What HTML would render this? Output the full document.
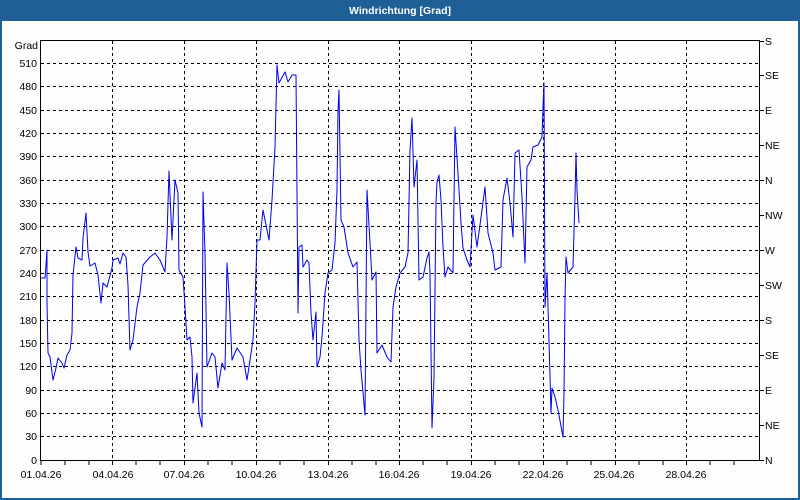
<!DOCTYPE html>
<html><head><meta charset="utf-8"><style>
html,body{margin:0;padding:0;width:800px;height:500px;overflow:hidden;background:#fff}
svg{display:block}
text{font-family:"Liberation Sans",sans-serif;font-size:10.5px;fill:#000}
</style></head><body>
<svg width="800" height="500" xmlns="http://www.w3.org/2000/svg">
<rect x="0" y="0" width="800" height="500" fill="#1e5f98"/>
<rect x="2" y="21" width="796" height="477" fill="#fdfdfd"/>
<text x="400" y="14" text-anchor="middle" style="font-weight:bold;fill:#fff;font-size:10.5px">Windrichtung [Grad]</text>
<g stroke="#000" stroke-width="1" stroke-dasharray="3,3" shape-rendering="crispEdges">
<line x1="41" y1="63.5" x2="759" y2="63.5"/>
<line x1="41" y1="86.5" x2="759" y2="86.5"/>
<line x1="41" y1="110.5" x2="759" y2="110.5"/>
<line x1="41" y1="133.5" x2="759" y2="133.5"/>
<line x1="41" y1="156.5" x2="759" y2="156.5"/>
<line x1="41" y1="180.5" x2="759" y2="180.5"/>
<line x1="41" y1="203.5" x2="759" y2="203.5"/>
<line x1="41" y1="226.5" x2="759" y2="226.5"/>
<line x1="41" y1="250.5" x2="759" y2="250.5"/>
<line x1="41" y1="273.5" x2="759" y2="273.5"/>
<line x1="41" y1="296.5" x2="759" y2="296.5"/>
<line x1="41" y1="320.5" x2="759" y2="320.5"/>
<line x1="41" y1="343.5" x2="759" y2="343.5"/>
<line x1="41" y1="366.5" x2="759" y2="366.5"/>
<line x1="41" y1="390.5" x2="759" y2="390.5"/>
<line x1="41" y1="413.5" x2="759" y2="413.5"/>
<line x1="41" y1="436.5" x2="759" y2="436.5"/>
<line x1="112.5" y1="41" x2="112.5" y2="460"/>
<line x1="184.5" y1="41" x2="184.5" y2="460"/>
<line x1="256.5" y1="41" x2="256.5" y2="460"/>
<line x1="328.5" y1="41" x2="328.5" y2="460"/>
<line x1="399.5" y1="41" x2="399.5" y2="460"/>
<line x1="471.5" y1="41" x2="471.5" y2="460"/>
<line x1="543.5" y1="41" x2="543.5" y2="460"/>
<line x1="615.5" y1="41" x2="615.5" y2="460"/>
<line x1="686.5" y1="41" x2="686.5" y2="460"/>
</g>
<polyline fill="none" stroke="#0000ee" stroke-width="1" stroke-linejoin="round" points="40,278 45,278 46,265 47,250 47,303 48,353 50,357 53,380 56,368 58,358 62,363 64,368 67,355 70,350 72,333 73,275 76,247 78,258 82,260 83,238 86,213 88,252 90,266 95,263 98,275 101,303 103,283 107,287 112,268 113,260 118,258 120,264 123,253 126,257 128,285 130,350 133,340 137,307 140,293 143,265 150,257 155,253 160,260 165,272 167,237 169,171 172,240 175,180 178,193 179,270 183,277 185,307 187,340 190,337 192,357 193,403 197,373 199,413 202,427 203,192 205,253 207,367 212,353 215,357 218,388 222,363 225,370 227,263 229,293 232,360 237,348 243,357 247,380 250,360 253,340 255,303 257,240 260,240 263,210 269,240 272,200 275,147 277,65 279,83 285,72 288,82 292,75 296,75 297,193 298,313 299,247 302,245 303,267 307,260 309,263 311,313 313,340 316,312 317,367 320,357 322,337 325,293 328,273 332,270 335,243 337,190 338,112 339,90 341,220 344,227 348,253 353,267 357,262 359,340 361,370 365,415 367,190 370,243 372,280 376,272 377,353 382,345 387,357 391,362 393,307 396,287 400,273 405,267 408,253 410,150 412,118 414,187 417,160 419,280 423,277 427,258 429,252 430,273 432,428 434,378 436,203 437,182 439,175 441,200 443,247 445,277 448,267 453,273 455,127 458,173 461,223 463,248 467,260 470,267 473,215 477,247 482,210 485,187 488,233 493,253 495,270 501,267 503,200 507,178 510,203 513,237 515,153 519,150 522,197 525,263 527,167 531,160 533,147 538,145 542,137 543,107 544,83 545,307 547,273 549,340 551,413 552,388 555,397 558,410 563,437 564,393 565,300 566,257 568,273 573,267 575,197 576,153 577,190 579,223"/>
<rect x="40.5" y="40.5" width="719" height="420" fill="none" stroke="#000" stroke-width="1" shape-rendering="crispEdges"/>
<g stroke="#000" stroke-width="1" shape-rendering="crispEdges">
<line x1="760" y1="41.5" x2="764" y2="41.5"/><line x1="760" y1="75.5" x2="764" y2="75.5"/><line x1="760" y1="110.5" x2="764" y2="110.5"/><line x1="760" y1="145.5" x2="764" y2="145.5"/><line x1="760" y1="180.5" x2="764" y2="180.5"/><line x1="760" y1="215.5" x2="764" y2="215.5"/><line x1="760" y1="250.5" x2="764" y2="250.5"/><line x1="760" y1="285.5" x2="764" y2="285.5"/><line x1="760" y1="320.5" x2="764" y2="320.5"/><line x1="760" y1="355.5" x2="764" y2="355.5"/><line x1="760" y1="390.5" x2="764" y2="390.5"/><line x1="760" y1="425.5" x2="764" y2="425.5"/><line x1="760" y1="460.5" x2="764" y2="460.5"/>
<path d="M41 461v4M65 461v4M89 461v4M112.5 461v4M136 461v4M160 461v4M184.5 461v4M208 461v4M232 461v4M256.5 461v4M280 461v4M304 461v4M328.5 461v4M352 461v4M376 461v4M399.5 461v4M423 461v4M447 461v4M471.5 461v4M495 461v4M519 461v4M543.5 461v4M567 461v4M591 461v4M615.5 461v4M639 461v4M663 461v4M686.5 461v4M710 461v4M734 461v4"/>
</g>
<g text-anchor="end">
<text x="38" y="49">Grad</text>
<text x="37" y="67">510</text><text x="37" y="90">480</text><text x="37" y="114">450</text><text x="37" y="137">420</text><text x="37" y="160">390</text><text x="37" y="184">360</text><text x="37" y="207">330</text><text x="37" y="230">300</text><text x="37" y="254">270</text><text x="37" y="277">240</text><text x="37" y="300">210</text><text x="37" y="324">180</text><text x="37" y="347">150</text><text x="37" y="370">120</text><text x="37" y="394">90</text><text x="37" y="417">60</text><text x="37" y="440">30</text><text x="37" y="464">0</text>
</g>
<g>
<text x="765" y="45">S</text><text x="765" y="79">SE</text><text x="765" y="114">E</text><text x="765" y="149">NE</text><text x="765" y="184">N</text><text x="765" y="219">NW</text><text x="765" y="254">W</text><text x="765" y="289">SW</text><text x="765" y="324">S</text><text x="765" y="359">SE</text><text x="765" y="394">E</text><text x="765" y="429">NE</text><text x="765" y="464">N</text>
</g>
<g text-anchor="middle">
<text x="41" y="478">01.04.26</text><text x="113" y="478">04.04.26</text><text x="184" y="478">07.04.26</text><text x="256" y="478">10.04.26</text><text x="328" y="478">13.04.26</text><text x="399" y="478">16.04.26</text><text x="471" y="478">19.04.26</text><text x="543" y="478">22.04.26</text><text x="614" y="478">25.04.26</text><text x="686" y="478">28.04.26</text>
</g>
</svg>
</body></html>
